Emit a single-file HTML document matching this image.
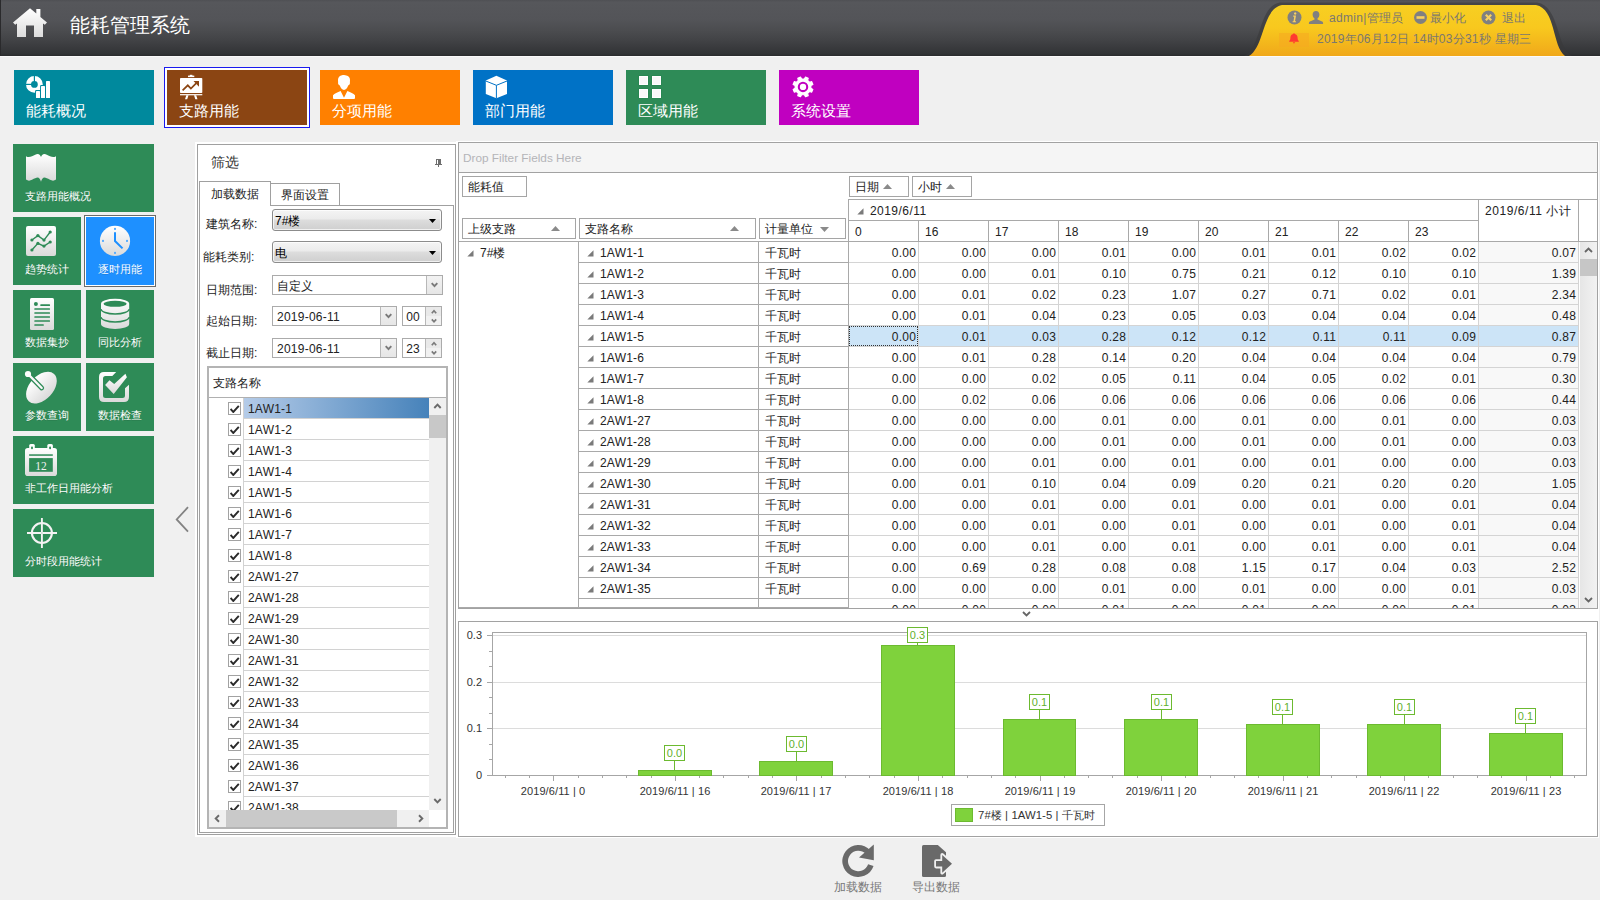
<!DOCTYPE html>
<html lang="zh"><head><meta charset="utf-8"><title>能耗管理系统</title>
<style>
*{box-sizing:border-box;margin:0;padding:0}
html,body{width:1600px;height:900px;overflow:hidden;background:#f0f0f0;font-family:"Liberation Sans",sans-serif;font-size:12px;color:#202020}
.a{position:absolute}
.t{position:absolute;white-space:nowrap;line-height:1}
#hdr{position:absolute;left:0;top:0;width:1600px;height:56px;background:linear-gradient(#4f5054 0%,#56575b 4%,#535458 35%,#4b4c4f 55%,#434447 70%,#393a3d 85%,#323436 96%,#2a2b2d 100%);border-left:1px solid #2a2a2c;box-shadow:0 1px 0 #fafafa}
.tile{position:absolute;width:140px;height:55px}
.tile .t{color:#fff;font-size:15px;left:12px;top:33px}
.lt{position:absolute;background:#2e8b57}
.lt .t{color:#fff;font-size:11px;text-shadow:0 1px 0 rgba(0,0,0,.15)}
.box{position:absolute;border:1px solid #a5a5a5;background:#fff}
.hl{position:absolute;height:1px;background:#a9a9a9}
.vl{position:absolute;width:1px;background:#a9a9a9}
.num{position:absolute;white-space:nowrap;line-height:1;text-align:right;font-size:12px;color:#222}

</style></head>
<body>
<div id="hdr"></div>
<svg class="a" style="left:0;top:0" width="60" height="45" viewBox="0 0 60 45"><defs><linearGradient id="hg" x1="0" y1="0" x2="0" y2="1"><stop offset="0" stop-color="#ffffff"/><stop offset="1" stop-color="#dcdcdc"/></linearGradient></defs><path d="M30 8.3 L13 22.4 L15.2 24.8 L17 23.4 V37 H26 V25.5 H34 V37 H43 V23.4 L44.8 24.8 L47 22.4 L40.4 16.9 V9 H36.3 V13.5 Z" fill="url(#hg)"/></svg>
<div class="t" style="left:70px;top:15px;font-size:20px;color:#fff">能耗管理系统</div>
<svg class="a" style="left:1240px;top:0" width="340" height="56" viewBox="1240 0 340 56"><defs><linearGradient id="yg" x1="0" y1="0" x2="0" y2="1"><stop offset="0" stop-color="#f7cf22"/><stop offset=".45" stop-color="#f8c81e"/><stop offset="1" stop-color="#f0a81a"/></linearGradient></defs><path d="M1244 56 C1262 48 1258 6 1280 2.5 L1537 2.5 C1560 6 1556 48 1572 56 Z" fill="#38393b" opacity=".6"/><path d="M1249 56 C1265 46 1262 9 1282 5 L1536 5 C1556 9 1552 46 1565 56 Z" fill="url(#yg)"/><circle cx="1294.5" cy="17.5" r="7" fill="#808080"/><path d="M1295.2 12.3 a1.2 1.2 0 1 1 -.01 0 Z M1293.2 15.6 H1296 L1295 21.2 H1296 V22.3 H1292.6 V21.2 H1293.5 L1294.2 16.7 H1293.2 Z" fill="#f7d060"/><path d="M1316 11 c2.2 0 3.4 1.6 3.4 3.6 c0 1.8 -.9 3.3 -1.9 4 v1 l4.6 2 c.8 .4 1 1 1 2 v.4 h-14.2 v-.4 c0 -1 .2 -1.6 1 -2 l4.6 -2 v-1 c-1 -.7 -1.9 -2.2 -1.9 -4 c0 -2 1.2 -3.6 3.4 -3.6 Z" fill="#808080"/><circle cx="1420.5" cy="17.5" r="6.5" fill="#808080"/><rect x="1416.5" y="16.2" width="8" height="2.6" fill="#f7d060"/><circle cx="1488.5" cy="17.5" r="7" fill="#808080"/><path d="M1485.8 14.8 L1491.2 20.2 M1491.2 14.8 L1485.8 20.2" stroke="#f7d060" stroke-width="2.2" fill="none"/><rect x="1279" y="33" width="30" height="14" fill="#f6a920" opacity=".55"/><g transform="translate(1294 38.5) scale(.8) translate(-1294 -38.5)"><path d="M1294 32 c.7 0 1 .4 1 1 c2.300 .5 3.500 2.300 3.500 4.600 c0 2.200 .6 3.200 1.500 4 v.9 h-12 v-.9 c.9 -.8 1.500 -1.800 1.500 -4 c0 -2.300 1.200 -4.100 3.500 -4.600 c0 -.6 .3 -1 1 -1 Z M1292.600 43.300 h2.800 a1.400 1.400 0 0 1 -2.800 0 Z" fill="#ff3a30"/></g></svg>
<div class="t" style="left:1329px;top:12px;font-size:12px;color:#7b7870;letter-spacing:0.3px">admin|管理员</div>
<div class="t" style="left:1430px;top:12px;font-size:12px;color:#7b7870">最小化</div>
<div class="t" style="left:1502px;top:12px;font-size:12px;color:#7b7870">退出</div>
<div class="t" style="left:1317px;top:33px;font-size:12px;color:#7b7870;letter-spacing:0.25px">2019年06月12日 14时03分31秒 星期三</div>
<div class="a" style="left:164px;top:67px;width:146px;height:61px;border:1px solid #1a1aee;background:#fff"></div>
<div class="tile" style="left:14px;top:70px;background:#00899d"><div class="t">能耗概况</div></div>
<div class="tile" style="left:167px;top:70px;background:#8b4513"><div class="t">支路用能</div></div>
<div class="tile" style="left:320px;top:70px;background:#ff8000"><div class="t">分项用能</div></div>
<div class="tile" style="left:473px;top:70px;background:#0072c6"><div class="t">部门用能</div></div>
<div class="tile" style="left:626px;top:70px;background:#2e8b57"><div class="t">区域用能</div></div>
<div class="tile" style="left:779px;top:70px;background:#c000c0"><div class="t">系统设置</div></div>
<svg class="a" style="left:22px;top:72px" width="34" height="30" viewBox="22 72 34 30"><circle cx="34.4" cy="84.4" r="5.9" fill="none" stroke="#fff" stroke-width="5"/><rect x="33.8" y="75" width="1.2" height="7" fill="#00899d"/><rect x="25" y="83.8" width="7" height="1.2" fill="#00899d"/><rect x="35.1" y="90.1" width="5.8" height="8.8" rx="1" fill="#00899d"/><rect x="36" y="91" width="4" height="7" rx=".6" fill="#fff"/><rect x="40.1" y="85.1" width="5.8" height="13.8" rx="1" fill="#00899d"/><rect x="41" y="86" width="4" height="12" rx=".6" fill="#fff"/><rect x="45.1" y="80.1" width="5.8" height="18.8" rx="1" fill="#00899d"/><rect x="46" y="81" width="4" height="17" rx=".6" fill="#fff"/></svg>
<svg class="a" style="left:176px;top:72px" width="30" height="30" viewBox="176 72 30 30"><rect x="180" y="78" width="22.3" height="15" rx=".8" fill="#fff"/><rect x="188" y="75.6" width="6.3" height="1.5" fill="#fff"/><rect x="189.8" y="74.8" width="2.6" height="1.5" fill="#fff"/><rect x="180" y="94.1" width="22.3" height="1.2" fill="#fff"/><path d="M186.3 95.3 L185 99.2 H187.2 L188.5 95.3 Z M194 95.3 L195.3 99.2 H197.5 L196.2 95.3 Z" fill="#fff"/><path d="M182.6 90.4 L187.8 85.3 L190.9 88.6 L196.3 83.2" fill="none" stroke="#8b4513" stroke-width="1.7"/><path d="M193.5 81 H199 V86.8 Z" fill="#8b4513"/></svg>
<svg class="a" style="left:330px;top:72px" width="30" height="30" viewBox="330 72 30 30"><path d="M344 74.9 c1 0 1.600 .3 2.300 .7 c2.300 .3 3.700 2 3.700 4.400 c0 1 -.1 1.500 -.1 2.200 c0 1 .2 1.700 -.7 2.600 c-.5 .5 -.900 .5 -1.200 1.300 c-.8 2.100 -2.100 3.800 -4 3.800 c-1.900 0 -3.200 -1.700 -4 -3.800 c-.3 -.8 -.7 -.8 -1.200 -1.300 c-.9 -.9 -.7 -1.600 -.7 -2.600 c0 -.7 -.1 -1.200 -.1 -2.200 c0 -2.600 1.700 -4.600 4 -4.800 c.7 -.2 1.300 -.3 2 -.3 Z" fill="#fff"/><path d="M340.600 90.900 L344 97.800 L347.400 90.900 C350.500 92 353.500 93.500 355 95.300 V98 Q355 99 354 99 H334 Q333 99 333 98 V95.300 C334.500 93.500 337.500 92 340.600 90.900 Z" fill="#fff"/></svg>
<svg class="a" style="left:482px;top:72px" width="30" height="30" viewBox="482 72 30 30"><path d="M496.4 75.700 L507 80.500 V93.900 L496.400 98.300 L485.800 93.900 V80.500 Z" fill="#fff"/><path d="M485.800 81 L496.400 85.300 L507 81 M496.400 85.300 V98.300" fill="none" stroke="#0072c6" stroke-width="1"/></svg>
<svg class="a" style="left:636px;top:72px" width="30" height="30" viewBox="636 72 30 30"><rect x="638.5" y="75.5" width="10" height="10" fill="#23844e"/><rect x="639" y="76" width="9" height="9" fill="#fff"/><rect x="640" y="77" width="7" height="7" fill="#f8f8f8"/><rect x="638.5" y="88.5" width="10" height="10" fill="#23844e"/><rect x="639" y="89" width="9" height="9" fill="#fff"/><rect x="640" y="90" width="7" height="7" fill="#f8f8f8"/><rect x="651.5" y="75.5" width="10" height="10" fill="#23844e"/><rect x="652" y="76" width="9" height="9" fill="#fff"/><rect x="653" y="77" width="7" height="7" fill="#f8f8f8"/><rect x="651.5" y="88.5" width="10" height="10" fill="#23844e"/><rect x="652" y="89" width="9" height="9" fill="#fff"/><rect x="653" y="90" width="7" height="7" fill="#f8f8f8"/></svg>
<svg class="a" style="left:789px;top:72px" width="30" height="30" viewBox="789 72 30 30"><path d="M810.89 88.22 L812.90 89.37 L811.74 92.15 L809.51 91.55 L807.65 93.41 L808.25 95.64 L805.47 96.80 L804.32 94.79 L801.68 94.79 L800.53 96.80 L797.75 95.64 L798.35 93.41 L796.49 91.55 L794.26 92.15 L793.10 89.37 L795.11 88.22 L795.11 85.58 L793.10 84.43 L794.26 81.65 L796.49 82.25 L798.35 80.39 L797.75 78.16 L800.53 77.00 L801.68 79.01 L804.32 79.01 L805.47 77.00 L808.25 78.16 L807.65 80.39 L809.51 82.25 L811.74 81.65 L812.90 84.43 L810.89 85.58 Z" fill="#fff" stroke="#fff" stroke-width="1.1" stroke-linejoin="round"/><circle cx="803.0" cy="86.9" r="4.2" fill="none" stroke="#c000c0" stroke-width="2.1"/></svg>
<div class="lt" style="left:13px;top:144px;width:141px;height:68px;"><div class="t" style="left:12px;top:47px">支路用能概况</div></div>
<div class="lt" style="left:13px;top:217px;width:68px;height:68px;"><div class="t" style="left:12px;top:47px">趋势统计</div></div>
<div class="a" style="left:84px;top:215px;width:72px;height:72px;border:1px solid #6a6a6a;background:#fff"></div>
<div class="lt" style="left:86px;top:217px;width:68px;height:68px;background:#1e90ff;"><div class="t" style="left:12px;top:47px">逐时用能</div></div>
<div class="lt" style="left:13px;top:290px;width:68px;height:68px;"><div class="t" style="left:12px;top:47px">数据集抄</div></div>
<div class="lt" style="left:86px;top:290px;width:68px;height:68px;"><div class="t" style="left:12px;top:47px">同比分析</div></div>
<div class="lt" style="left:13px;top:363px;width:68px;height:68px;"><div class="t" style="left:12px;top:47px">参数查询</div></div>
<div class="lt" style="left:86px;top:363px;width:68px;height:68px;"><div class="t" style="left:12px;top:47px">数据检查</div></div>
<div class="lt" style="left:13px;top:436px;width:141px;height:68px;"><div class="t" style="left:12px;top:47px">非工作日用能分析</div></div>
<div class="lt" style="left:13px;top:509px;width:141px;height:68px;"><div class="t" style="left:12px;top:47px">分时段用能统计</div></div>
<svg class="a" style="left:0;top:140px" width="160" height="440" viewBox="0 140 160 440"><defs><linearGradient id="ig" x1="0" y1="0" x2="0" y2="1"><stop offset="0" stop-color="#ffffff"/><stop offset="1" stop-color="#dadada"/></linearGradient></defs><path d="M26 156.200 C28 157.600 30 157.200 32 156.300 C34.500 155 36.200 153.900 37.500 153.900 C39.500 153.900 40.500 155.300 41 157 C41.500 155.300 42.500 153.900 44.500 153.900 C45.800 153.900 47.500 155 50 156.300 C52 157.200 54 157.600 56 156.200 V179.500 C54 181.100 52 180.800 50 179.800 C47.500 178.600 45.800 177.600 44.500 177.600 C42.800 177.600 41.700 179.300 41 181.800 C40.300 179.300 39.200 177.600 37.500 177.600 C36.200 177.600 34.500 178.600 32 179.800 C30 180.800 28 181.100 26 179.500 Z" fill="url(#ig)"/><rect x="26" y="226" width="30" height="30" rx="2" fill="url(#ig)"/><path d="M31.9 240.0 L37.9 235.6 L44.0 240.1 L50.2 232.0" fill="none" stroke="#2e8b57" stroke-width="1.4"/><circle cx="31.9" cy="240.0" r="1.6" fill="#2e8b57"/><circle cx="37.9" cy="235.6" r="1.6" fill="#2e8b57"/><circle cx="44.0" cy="240.1" r="1.6" fill="#2e8b57"/><circle cx="50.2" cy="232.0" r="1.6" fill="#2e8b57"/><path d="M31.9 250.0 L37.9 243.4 L44.0 246.1 L50.2 242.0" fill="none" stroke="#2e8b57" stroke-width="1.4"/><circle cx="31.9" cy="250.0" r="1.6" fill="#2e8b57"/><circle cx="37.9" cy="243.4" r="1.6" fill="#2e8b57"/><circle cx="44.0" cy="246.1" r="1.6" fill="#2e8b57"/><circle cx="50.2" cy="242.0" r="1.6" fill="#2e8b57"/><circle cx="115" cy="240.900" r="15.100" fill="url(#ig)"/><rect x="114.0" y="227.9" width="2" height="2" fill="#5aaeff"/><rect x="126.0" y="239.9" width="2" height="2" fill="#5aaeff"/><rect x="114.0" y="251.9" width="2" height="2" fill="#5aaeff"/><rect x="102.0" y="239.9" width="2" height="2" fill="#5aaeff"/><path d="M115 232.300 V241 L122.500 248.400" fill="none" stroke="#1e90ff" stroke-width="2"/><rect x="30" y="298" width="24" height="32" rx="1.500" fill="url(#ig)"/><circle cx="35.900" cy="303.900" r="2" fill="#2e8b57"/><rect x="40.300" y="304.300" width="9.700" height="1.600" rx=".5" fill="#2e8b57"/><rect x="34.300" y="308.2" width="15.700" height="1.600" rx=".5" fill="#2e8b57"/><rect x="34.300" y="312.2" width="15.700" height="1.600" rx=".5" fill="#2e8b57"/><rect x="34.300" y="316.2" width="15.700" height="1.600" rx=".5" fill="#2e8b57"/><rect x="34.300" y="320.2" width="15.700" height="1.600" rx=".5" fill="#2e8b57"/><rect x="34.300" y="324.200" width="9.500" height="1.600" rx=".5" fill="#2e8b57"/><path d="M101 303.700 A14.100 5 0 0 1 129.200 303.700 V324 A14.100 5 0 0 1 101 324 Z" fill="url(#ig)"/><ellipse cx="115.100" cy="303.800" rx="11.600" ry="3" fill="#2e8b57"/><path d="M101 309 A14.100 5 0 0 0 129.200 309 M101 317 A14.100 5 0 0 0 129.200 317" fill="none" stroke="#2e8b57" stroke-width="1.400"/><ellipse cx="41.400" cy="387.600" rx="18.600" ry="11.800" transform="rotate(-47 41.400 387.600)" fill="url(#ig)"/><path d="M28 374 L41.700 388" fill="none" stroke="#2e8b57" stroke-width="4.800" stroke-linecap="round"/><path d="M28 374 L41.700 388" fill="none" stroke="#f8f8f8" stroke-width="2.400" stroke-linecap="round"/><circle cx="28" cy="374" r="3.100" fill="#fcfcfc"/><path d="M116.200 372 H104 Q99 372 99 377 V397 Q99 402 104 402 H124 Q129 402 129 397 V384.800 L125 388.300 V395.500 Q125 398 122.500 398 H105.500 Q103 398 103 395.500 V378.500 Q103 376 105.500 376 H112.300 Z" fill="url(#ig)"/><path d="M105.100 385 L109.500 380.200 L114.200 383.900 L125.400 373.800 L126.900 377.200 L113.700 394.100 Z" fill="url(#ig)"/><rect x="25" y="448" width="32" height="28" rx="2.800" fill="url(#ig)"/><rect x="29.2" y="444.100" width="5.600" height="6.500" rx="1.500" fill="#fdfdfd"/><rect x="31.1" y="446.400" width="1.800" height="2.800" rx=".8" fill="#2e8b57"/><rect x="47.3" y="444.100" width="5.600" height="6.500" rx="1.500" fill="#fdfdfd"/><rect x="49.2" y="446.400" width="1.800" height="2.800" rx=".8" fill="#2e8b57"/><rect x="29.100" y="454.300" width="23.700" height="1.500" fill="#2e8b57"/><rect x="29.100" y="458.100" width="23.700" height="13.700" fill="#2e8b57"/><text x="41.100" y="470" font-family="Liberation Serif,serif" font-size="11.500" text-anchor="middle" fill="#f0f0f0">12</text><circle cx="41.900" cy="533" r="10" fill="none" stroke="#f4f2f3" stroke-width="2.100"/><path d="M27 533 H57 M41.900 518.100 V547.900" fill="none" stroke="#f4f2f3" stroke-width="1.900"/><rect x="41.400" y="532.500" width="1" height="1" fill="#7fb999"/></svg>
<svg class="a" style="left:174px;top:504px" width="16" height="30" viewBox="0 0 16 30"><path d="M14 3.2 L2.700 15.400 L14 27.700" fill="none" stroke="#838383" stroke-width="1.800"/></svg>
<div class="a" style="left:195px;top:142px;width:262px;height:695px;background:#fff"></div>
<div class="a" style="left:197px;top:144px;width:259px;height:691px;border:1px solid #a0a0a0;background:#fff"></div>
<div class="t" style="left:211px;top:155px;font-size:14px;color:#333">筛选</div>
<svg class="a" style="left:434px;top:158px" width="9" height="10" viewBox="434 158 9 10" shape-rendering="crispEdges"><g fill="#6e6e6e"><rect x="436" y="159" width="5" height="1"/><rect x="436" y="159" width="1" height="5"/><rect x="438" y="159" width="3" height="5"/><rect x="435" y="164" width="7" height="1"/><rect x="438" y="165" width="1" height="2"/></g></svg>
<div class="a" style="left:199px;top:205px;width:255px;height:628px;border:1px solid #a0a0a0;background:#fff"></div>
<div class="a" style="left:270px;top:183px;width:70px;height:23px;border:1px solid #a0a0a0;background:#fff"></div>
<div class="a" style="left:199px;top:181px;width:72px;height:25px;border:1px solid #a0a0a0;border-bottom:none;background:#fff"></div>
<div class="t" style="left:211px;top:188px;font-size:12px;color:#222">加载数据</div>
<div class="t" style="left:281px;top:189px;font-size:12px;color:#222">界面设置</div>
<div class="t" style="left:206px;top:218px;font-size:12px;color:#222">建筑名称:</div>
<div class="t" style="left:203px;top:251px;font-size:12px;color:#222">能耗类别:</div>
<div class="t" style="left:206px;top:284px;font-size:12px;color:#222">日期范围:</div>
<div class="t" style="left:206px;top:315px;font-size:12px;color:#222">起始日期:</div>
<div class="t" style="left:206px;top:347px;font-size:12px;color:#222">截止日期:</div>
<div class="a" style="left:272px;top:209px;width:170px;height:22px;border:1px solid #8c8c8c;border-radius:3px;background:linear-gradient(#f4f4f4 0%,#ebebeb 45%,#dddddd 50%,#cfcfcf 100%);box-shadow:inset 0 0 0 1px rgba(255,255,255,.7)"><div class="t" style="left:2px;top:5px;font-size:12px;color:#000">7#楼</div><svg class="a" style="left:156px;top:9px" width="7" height="4" viewBox="0 0 7 4"><path d="M0 0 H7 L3.5 4 Z" fill="#000"/></svg></div>
<div class="a" style="left:272px;top:241px;width:170px;height:22px;border:1px solid #8c8c8c;border-radius:3px;background:linear-gradient(#f4f4f4 0%,#ebebeb 45%,#dddddd 50%,#cfcfcf 100%);box-shadow:inset 0 0 0 1px rgba(255,255,255,.7)"><div class="t" style="left:2px;top:5px;font-size:12px;color:#000">电</div><svg class="a" style="left:156px;top:9px" width="7" height="4" viewBox="0 0 7 4"><path d="M0 0 H7 L3.5 4 Z" fill="#000"/></svg></div>
<div class="box" style="left:272px;top:275px;width:171px;height:20px;border-color:#ababab"><div class="t" style="left:4px;top:4px;font-size:12px;color:#222">自定义</div><div class="a" style="left:153px;top:0;width:16px;height:18px;background:linear-gradient(#f2f2f2,#e6e6e6);border-left:1px solid #b8b8b8"></div><svg class="a" style="left:157px;top:6px" width="9" height="6" viewBox="0 0 9 6"><path d="M1.7 1.1 L4.5 4.1 L7.3 1.1" fill="none" stroke="#7a7a7a" stroke-width="1.9"/></svg></div>
<div class="box" style="left:272px;top:306px;width:125px;height:20px;border-color:#ababab"><div class="t" style="left:4px;top:4px;font-size:12px;color:#222;letter-spacing:0.25px">2019-06-11</div><div class="a" style="left:107px;top:0;width:16px;height:18px;background:linear-gradient(#f2f2f2,#e6e6e6);border-left:1px solid #b8b8b8"></div><svg class="a" style="left:111px;top:6px" width="9" height="6" viewBox="0 0 9 6"><path d="M1.7 1.1 L4.5 4.1 L7.3 1.1" fill="none" stroke="#7a7a7a" stroke-width="1.9"/></svg></div>
<div class="box" style="left:402px;top:306px;width:40px;height:20px;border-color:#ababab"><div class="t" style="left:3.3px;top:4px;font-size:12px;color:#222">00</div><div class="a" style="left:22px;top:0;width:16px;height:18px;background:linear-gradient(#e9e9e9 0%,#e9e9e9 50%,#f1f1f1 50%,#f1f1f1 100%);border-left:1px solid #b8b8b8"></div><svg class="a" style="left:27px;top:1px" width="8" height="16" viewBox="0 0 8 16"><path d="M1.8 5.2 L4 2.8 L6.2 5.2 M1.8 11.4 L4 13.8 L6.2 11.4" fill="none" stroke="#7a7a7a" stroke-width="1.7"/></svg></div>
<div class="box" style="left:272px;top:338px;width:125px;height:20px;border-color:#ababab"><div class="t" style="left:4px;top:4px;font-size:12px;color:#222;letter-spacing:0.25px">2019-06-11</div><div class="a" style="left:107px;top:0;width:16px;height:18px;background:linear-gradient(#f2f2f2,#e6e6e6);border-left:1px solid #b8b8b8"></div><svg class="a" style="left:111px;top:6px" width="9" height="6" viewBox="0 0 9 6"><path d="M1.7 1.1 L4.5 4.1 L7.3 1.1" fill="none" stroke="#7a7a7a" stroke-width="1.9"/></svg></div>
<div class="box" style="left:402px;top:338px;width:40px;height:20px;border-color:#ababab"><div class="t" style="left:3.3px;top:4px;font-size:12px;color:#222">23</div><div class="a" style="left:22px;top:0;width:16px;height:18px;background:linear-gradient(#e9e9e9 0%,#e9e9e9 50%,#f1f1f1 50%,#f1f1f1 100%);border-left:1px solid #b8b8b8"></div><svg class="a" style="left:27px;top:1px" width="8" height="16" viewBox="0 0 8 16"><path d="M1.8 5.2 L4 2.8 L6.2 5.2 M1.8 11.4 L4 13.8 L6.2 11.4" fill="none" stroke="#7a7a7a" stroke-width="1.7"/></svg></div>
<div class="a" style="left:207px;top:366px;width:241px;height:463px;border:2px solid #b4b4b4;background:#fff"></div>
<div class="t" style="left:213px;top:377px;font-size:12px;color:#222">支路名称</div>
<div class="hl" style="left:209px;top:397px;width:237px;height:1px;background:#b0b0b0"></div>
<div class="a" style="left:209px;top:398px;width:220px;height:412px;overflow:hidden">
<div class="a" style="left:35px;top:0;width:185px;height:20px;background:linear-gradient(90deg,#b4cbe8,#4682ba)"></div>
<div class="hl" style="left:35px;top:20px;width:185px;background:#d2d2d2"></div>
<div class="a" style="left:19px;top:4px;width:13px;height:13px;border:1px solid #a2a2a2;background:#fff"></div><svg class="a" style="left:21px;top:6px" width="10" height="9" viewBox="0 0 10 9"><path d="M0.6 4.9 L3.3 8 L8.8 1.9" fill="none" stroke="#2a2a2a" stroke-width="1.9"/></svg>
<div class="t" style="left:39px;top:5px;font-size:12px;color:#222;letter-spacing:0.2px">1AW1-1</div>
<div class="hl" style="left:35px;top:41px;width:185px;background:#d2d2d2"></div>
<div class="a" style="left:19px;top:25px;width:13px;height:13px;border:1px solid #a2a2a2;background:#fff"></div><svg class="a" style="left:21px;top:27px" width="10" height="9" viewBox="0 0 10 9"><path d="M0.6 4.9 L3.3 8 L8.8 1.9" fill="none" stroke="#2a2a2a" stroke-width="1.9"/></svg>
<div class="t" style="left:39px;top:26px;font-size:12px;color:#222;letter-spacing:0.2px">1AW1-2</div>
<div class="hl" style="left:35px;top:62px;width:185px;background:#d2d2d2"></div>
<div class="a" style="left:19px;top:46px;width:13px;height:13px;border:1px solid #a2a2a2;background:#fff"></div><svg class="a" style="left:21px;top:48px" width="10" height="9" viewBox="0 0 10 9"><path d="M0.6 4.9 L3.3 8 L8.8 1.9" fill="none" stroke="#2a2a2a" stroke-width="1.9"/></svg>
<div class="t" style="left:39px;top:47px;font-size:12px;color:#222;letter-spacing:0.2px">1AW1-3</div>
<div class="hl" style="left:35px;top:83px;width:185px;background:#d2d2d2"></div>
<div class="a" style="left:19px;top:67px;width:13px;height:13px;border:1px solid #a2a2a2;background:#fff"></div><svg class="a" style="left:21px;top:69px" width="10" height="9" viewBox="0 0 10 9"><path d="M0.6 4.9 L3.3 8 L8.8 1.9" fill="none" stroke="#2a2a2a" stroke-width="1.9"/></svg>
<div class="t" style="left:39px;top:68px;font-size:12px;color:#222;letter-spacing:0.2px">1AW1-4</div>
<div class="hl" style="left:35px;top:104px;width:185px;background:#d2d2d2"></div>
<div class="a" style="left:19px;top:88px;width:13px;height:13px;border:1px solid #a2a2a2;background:#fff"></div><svg class="a" style="left:21px;top:90px" width="10" height="9" viewBox="0 0 10 9"><path d="M0.6 4.9 L3.3 8 L8.8 1.9" fill="none" stroke="#2a2a2a" stroke-width="1.9"/></svg>
<div class="t" style="left:39px;top:89px;font-size:12px;color:#222;letter-spacing:0.2px">1AW1-5</div>
<div class="hl" style="left:35px;top:125px;width:185px;background:#d2d2d2"></div>
<div class="a" style="left:19px;top:109px;width:13px;height:13px;border:1px solid #a2a2a2;background:#fff"></div><svg class="a" style="left:21px;top:111px" width="10" height="9" viewBox="0 0 10 9"><path d="M0.6 4.9 L3.3 8 L8.8 1.9" fill="none" stroke="#2a2a2a" stroke-width="1.9"/></svg>
<div class="t" style="left:39px;top:110px;font-size:12px;color:#222;letter-spacing:0.2px">1AW1-6</div>
<div class="hl" style="left:35px;top:146px;width:185px;background:#d2d2d2"></div>
<div class="a" style="left:19px;top:130px;width:13px;height:13px;border:1px solid #a2a2a2;background:#fff"></div><svg class="a" style="left:21px;top:132px" width="10" height="9" viewBox="0 0 10 9"><path d="M0.6 4.9 L3.3 8 L8.8 1.9" fill="none" stroke="#2a2a2a" stroke-width="1.9"/></svg>
<div class="t" style="left:39px;top:131px;font-size:12px;color:#222;letter-spacing:0.2px">1AW1-7</div>
<div class="hl" style="left:35px;top:167px;width:185px;background:#d2d2d2"></div>
<div class="a" style="left:19px;top:151px;width:13px;height:13px;border:1px solid #a2a2a2;background:#fff"></div><svg class="a" style="left:21px;top:153px" width="10" height="9" viewBox="0 0 10 9"><path d="M0.6 4.9 L3.3 8 L8.8 1.9" fill="none" stroke="#2a2a2a" stroke-width="1.9"/></svg>
<div class="t" style="left:39px;top:152px;font-size:12px;color:#222;letter-spacing:0.2px">1AW1-8</div>
<div class="hl" style="left:35px;top:188px;width:185px;background:#d2d2d2"></div>
<div class="a" style="left:19px;top:172px;width:13px;height:13px;border:1px solid #a2a2a2;background:#fff"></div><svg class="a" style="left:21px;top:174px" width="10" height="9" viewBox="0 0 10 9"><path d="M0.6 4.9 L3.3 8 L8.8 1.9" fill="none" stroke="#2a2a2a" stroke-width="1.9"/></svg>
<div class="t" style="left:39px;top:173px;font-size:12px;color:#222;letter-spacing:0.2px">2AW1-27</div>
<div class="hl" style="left:35px;top:209px;width:185px;background:#d2d2d2"></div>
<div class="a" style="left:19px;top:193px;width:13px;height:13px;border:1px solid #a2a2a2;background:#fff"></div><svg class="a" style="left:21px;top:195px" width="10" height="9" viewBox="0 0 10 9"><path d="M0.6 4.9 L3.3 8 L8.8 1.9" fill="none" stroke="#2a2a2a" stroke-width="1.9"/></svg>
<div class="t" style="left:39px;top:194px;font-size:12px;color:#222;letter-spacing:0.2px">2AW1-28</div>
<div class="hl" style="left:35px;top:230px;width:185px;background:#d2d2d2"></div>
<div class="a" style="left:19px;top:214px;width:13px;height:13px;border:1px solid #a2a2a2;background:#fff"></div><svg class="a" style="left:21px;top:216px" width="10" height="9" viewBox="0 0 10 9"><path d="M0.6 4.9 L3.3 8 L8.8 1.9" fill="none" stroke="#2a2a2a" stroke-width="1.9"/></svg>
<div class="t" style="left:39px;top:215px;font-size:12px;color:#222;letter-spacing:0.2px">2AW1-29</div>
<div class="hl" style="left:35px;top:251px;width:185px;background:#d2d2d2"></div>
<div class="a" style="left:19px;top:235px;width:13px;height:13px;border:1px solid #a2a2a2;background:#fff"></div><svg class="a" style="left:21px;top:237px" width="10" height="9" viewBox="0 0 10 9"><path d="M0.6 4.9 L3.3 8 L8.8 1.9" fill="none" stroke="#2a2a2a" stroke-width="1.9"/></svg>
<div class="t" style="left:39px;top:236px;font-size:12px;color:#222;letter-spacing:0.2px">2AW1-30</div>
<div class="hl" style="left:35px;top:272px;width:185px;background:#d2d2d2"></div>
<div class="a" style="left:19px;top:256px;width:13px;height:13px;border:1px solid #a2a2a2;background:#fff"></div><svg class="a" style="left:21px;top:258px" width="10" height="9" viewBox="0 0 10 9"><path d="M0.6 4.9 L3.3 8 L8.8 1.9" fill="none" stroke="#2a2a2a" stroke-width="1.9"/></svg>
<div class="t" style="left:39px;top:257px;font-size:12px;color:#222;letter-spacing:0.2px">2AW1-31</div>
<div class="hl" style="left:35px;top:293px;width:185px;background:#d2d2d2"></div>
<div class="a" style="left:19px;top:277px;width:13px;height:13px;border:1px solid #a2a2a2;background:#fff"></div><svg class="a" style="left:21px;top:279px" width="10" height="9" viewBox="0 0 10 9"><path d="M0.6 4.9 L3.3 8 L8.8 1.9" fill="none" stroke="#2a2a2a" stroke-width="1.9"/></svg>
<div class="t" style="left:39px;top:278px;font-size:12px;color:#222;letter-spacing:0.2px">2AW1-32</div>
<div class="hl" style="left:35px;top:314px;width:185px;background:#d2d2d2"></div>
<div class="a" style="left:19px;top:298px;width:13px;height:13px;border:1px solid #a2a2a2;background:#fff"></div><svg class="a" style="left:21px;top:300px" width="10" height="9" viewBox="0 0 10 9"><path d="M0.6 4.9 L3.3 8 L8.8 1.9" fill="none" stroke="#2a2a2a" stroke-width="1.9"/></svg>
<div class="t" style="left:39px;top:299px;font-size:12px;color:#222;letter-spacing:0.2px">2AW1-33</div>
<div class="hl" style="left:35px;top:335px;width:185px;background:#d2d2d2"></div>
<div class="a" style="left:19px;top:319px;width:13px;height:13px;border:1px solid #a2a2a2;background:#fff"></div><svg class="a" style="left:21px;top:321px" width="10" height="9" viewBox="0 0 10 9"><path d="M0.6 4.9 L3.3 8 L8.8 1.9" fill="none" stroke="#2a2a2a" stroke-width="1.9"/></svg>
<div class="t" style="left:39px;top:320px;font-size:12px;color:#222;letter-spacing:0.2px">2AW1-34</div>
<div class="hl" style="left:35px;top:356px;width:185px;background:#d2d2d2"></div>
<div class="a" style="left:19px;top:340px;width:13px;height:13px;border:1px solid #a2a2a2;background:#fff"></div><svg class="a" style="left:21px;top:342px" width="10" height="9" viewBox="0 0 10 9"><path d="M0.6 4.9 L3.3 8 L8.8 1.9" fill="none" stroke="#2a2a2a" stroke-width="1.9"/></svg>
<div class="t" style="left:39px;top:341px;font-size:12px;color:#222;letter-spacing:0.2px">2AW1-35</div>
<div class="hl" style="left:35px;top:377px;width:185px;background:#d2d2d2"></div>
<div class="a" style="left:19px;top:361px;width:13px;height:13px;border:1px solid #a2a2a2;background:#fff"></div><svg class="a" style="left:21px;top:363px" width="10" height="9" viewBox="0 0 10 9"><path d="M0.6 4.9 L3.3 8 L8.8 1.9" fill="none" stroke="#2a2a2a" stroke-width="1.9"/></svg>
<div class="t" style="left:39px;top:362px;font-size:12px;color:#222;letter-spacing:0.2px">2AW1-36</div>
<div class="hl" style="left:35px;top:398px;width:185px;background:#d2d2d2"></div>
<div class="a" style="left:19px;top:382px;width:13px;height:13px;border:1px solid #a2a2a2;background:#fff"></div><svg class="a" style="left:21px;top:384px" width="10" height="9" viewBox="0 0 10 9"><path d="M0.6 4.9 L3.3 8 L8.8 1.9" fill="none" stroke="#2a2a2a" stroke-width="1.9"/></svg>
<div class="t" style="left:39px;top:383px;font-size:12px;color:#222;letter-spacing:0.2px">2AW1-37</div>
<div class="hl" style="left:35px;top:419px;width:185px;background:#d2d2d2"></div>
<div class="a" style="left:19px;top:403px;width:13px;height:13px;border:1px solid #a2a2a2;background:#fff"></div><svg class="a" style="left:21px;top:405px" width="10" height="9" viewBox="0 0 10 9"><path d="M0.6 4.9 L3.3 8 L8.8 1.9" fill="none" stroke="#2a2a2a" stroke-width="1.9"/></svg>
<div class="t" style="left:39px;top:404px;font-size:12px;color:#222;letter-spacing:0.2px">2AW1-38</div>
<div class="vl" style="left:34px;top:0;height:412px;background:#d2d2d2"></div>
</div>
<div class="a" style="left:429px;top:398px;width:17px;height:412px;background:#f0f0f0"></div>
<div class="a" style="left:429px;top:415px;width:17px;height:23px;background:#c8c8c8"></div>
<svg class="a" style="left:433px;top:403px" width="9" height="6" viewBox="0 0 9 6"><path d="M1.3 5 L4.5 1.7 L7.7 5" fill="none" stroke="#6a6a6a" stroke-width="1.9"/></svg>
<svg class="a" style="left:433px;top:798px" width="9" height="6" viewBox="0 0 9 6"><path d="M1.3 1 L4.5 4.3 L7.7 1" fill="none" stroke="#6a6a6a" stroke-width="1.9"/></svg>
<div class="a" style="left:209px;top:810px;width:220px;height:17px;background:#f0f0f0"></div>
<div class="a" style="left:226px;top:810px;width:171px;height:17px;background:#c9c9c9"></div>
<svg class="a" style="left:214px;top:814px" width="6" height="9" viewBox="0 0 6 9"><path d="M5 1.3 L1.7 4.5 L5 7.7" fill="none" stroke="#6a6a6a" stroke-width="1.9"/></svg>
<svg class="a" style="left:418px;top:814px" width="6" height="9" viewBox="0 0 6 9"><path d="M1 1.3 L4.3 4.5 L1 7.7" fill="none" stroke="#6a6a6a" stroke-width="1.9"/></svg>
<div class="a" style="left:456px;top:141px;width:1143px;height:697px;background:#fff"></div>
<div class="a" id="grid" style="left:458px;top:142px;width:1140px;height:467px;border:1px solid #a2a2a2;background:#fff;overflow:hidden"></div>
<div class="a" style="left:459px;top:143px;width:1138px;height:29px;background:#f5f5f5"></div>
<div class="hl" style="left:459px;top:172px;width:1138px;background:#a2a2a2"></div>
<div class="t" style="left:463px;top:153px;font-size:11.8px;color:#b4b4b8">Drop Filter Fields Here</div>
<div class="box" style="left:462px;top:176px;width:65px;height:21px"><div class="t" style="left:5px;top:4px;font-size:12px;color:#222">能耗值</div></div>
<div class="box" style="left:849px;top:176px;width:60px;height:21px"><div class="t" style="left:5px;top:4px;font-size:12px;color:#222">日期</div><svg class="a" style="left:33px;top:7px" width="9" height="5" viewBox="0 0 9 5"><path d="M0 5 L4.5 0 L9 5 Z" fill="#8a8a8a"/></svg></div>
<div class="box" style="left:912px;top:176px;width:60px;height:21px"><div class="t" style="left:5px;top:4px;font-size:12px;color:#222">小时</div><svg class="a" style="left:33px;top:7px" width="9" height="5" viewBox="0 0 9 5"><path d="M0 5 L4.5 0 L9 5 Z" fill="#8a8a8a"/></svg></div>
<div class="box" style="left:462px;top:218px;width:114px;height:21px"><div class="t" style="left:5px;top:4px;font-size:12px;color:#222">上级支路</div><svg class="a" style="left:88px;top:7px" width="9" height="5" viewBox="0 0 9 5"><path d="M0 5 L4.5 0 L9 5 Z" fill="#8a8a8a"/></svg></div>
<div class="box" style="left:579px;top:218px;width:177px;height:21px"><div class="t" style="left:5px;top:4px;font-size:12px;color:#222">支路名称</div><svg class="a" style="left:150px;top:7px" width="9" height="5" viewBox="0 0 9 5"><path d="M0 5 L4.5 0 L9 5 Z" fill="#8a8a8a"/></svg></div>
<div class="box" style="left:759px;top:218px;width:87px;height:21px"><div class="t" style="left:5px;top:4px;font-size:12px;color:#222">计量单位</div><svg class="a" style="left:60px;top:8px" width="9" height="5" viewBox="0 0 9 5"><path d="M0 0 L9 0 L4.5 5 Z" fill="#8a8a8a"/></svg></div>
<div class="hl" style="left:848px;top:199px;width:749px"></div>
<div class="vl" style="left:848px;top:199px;height:409px"></div>
<div class="hl" style="left:848px;top:220px;width:631px"></div>
<div class="hl" style="left:459px;top:241px;width:1138px"></div>
<div class="vl" style="left:1478px;top:199px;height:43px"></div>
<div class="vl" style="left:1578px;top:199px;height:43px"></div>
<div class="vl" style="left:918px;top:221px;height:21px"></div>
<div class="vl" style="left:988px;top:221px;height:21px"></div>
<div class="vl" style="left:1058px;top:221px;height:21px"></div>
<div class="vl" style="left:1128px;top:221px;height:21px"></div>
<div class="vl" style="left:1198px;top:221px;height:21px"></div>
<div class="vl" style="left:1268px;top:221px;height:21px"></div>
<div class="vl" style="left:1338px;top:221px;height:21px"></div>
<div class="vl" style="left:1408px;top:221px;height:21px"></div>
<svg class="a" style="left:857px;top:208px" width="7" height="7" viewBox="0 0 7 7"><path d="M6.5 .3 V6.5 H.3 Z" fill="#7a7a7a"/></svg>
<div class="t" style="left:870px;top:205px;font-size:12px;color:#222;letter-spacing:0.45px">2019/6/11</div>
<div class="t" style="left:1485px;top:205px;font-size:12px;color:#222;letter-spacing:0.55px">2019/6/11 小计</div>
<div class="t" style="left:855px;top:226px;font-size:12px;color:#222">0</div>
<div class="t" style="left:925px;top:226px;font-size:12px;color:#222">16</div>
<div class="t" style="left:995px;top:226px;font-size:12px;color:#222">17</div>
<div class="t" style="left:1065px;top:226px;font-size:12px;color:#222">18</div>
<div class="t" style="left:1135px;top:226px;font-size:12px;color:#222">19</div>
<div class="t" style="left:1205px;top:226px;font-size:12px;color:#222">20</div>
<div class="t" style="left:1275px;top:226px;font-size:12px;color:#222">21</div>
<div class="t" style="left:1345px;top:226px;font-size:12px;color:#222">22</div>
<div class="t" style="left:1415px;top:226px;font-size:12px;color:#222">23</div>
<div class="a" style="left:459px;top:242px;width:1138px;height:366px;overflow:hidden">
<div class="a" style="left:1020px;top:0;width:99px;height:366px;background:#f8f8f8"></div>
<div class="a" style="left:390px;top:84px;width:729px;height:20px;background:#cce4f7"></div>
<div class="vl" style="left:119px;top:0;height:366px"></div>
<div class="vl" style="left:299px;top:0;height:366px"></div>
<div class="vl" style="left:459px;top:0;height:366px;background:#d4d4d4"></div>
<div class="vl" style="left:529px;top:0;height:366px;background:#d4d4d4"></div>
<div class="vl" style="left:599px;top:0;height:366px;background:#d4d4d4"></div>
<div class="vl" style="left:669px;top:0;height:366px;background:#d4d4d4"></div>
<div class="vl" style="left:739px;top:0;height:366px;background:#d4d4d4"></div>
<div class="vl" style="left:809px;top:0;height:366px;background:#d4d4d4"></div>
<div class="vl" style="left:879px;top:0;height:366px;background:#d4d4d4"></div>
<div class="vl" style="left:949px;top:0;height:366px;background:#d4d4d4"></div>
<div class="vl" style="left:1019px;top:0;height:366px;background:#d4d4d4"></div>
<div class="vl" style="left:1119px;top:0;height:366px;background:#d4d4d4"></div>
<svg class="a" style="left:8px;top:8px" width="7" height="7" viewBox="0 0 7 7"><path d="M6.5 .3 V6.5 H.3 Z" fill="#7a7a7a"/></svg>
<div class="t" style="left:21px;top:5px;font-size:12px;color:#222">7#楼</div>
<div class="hl" style="left:119px;top:20px;width:270px"></div>
<div class="hl" style="left:390px;top:20px;width:729px;background:#d4d4d4"></div>
<svg class="a" style="left:128px;top:8px" width="7" height="7" viewBox="0 0 7 7"><path d="M6.5 .3 V6.5 H.3 Z" fill="#7a7a7a"/></svg>
<div class="t" style="left:141px;top:5px;font-size:12px;color:#222;letter-spacing:0.2px">1AW1-1</div>
<div class="t" style="left:306px;top:5px;font-size:12px;color:#222">千瓦时</div>
<div class="num" style="left:397.3px;top:5px;width:60px;letter-spacing:0.3px">0.00</div>
<div class="num" style="left:467.3px;top:5px;width:60px;letter-spacing:0.3px">0.00</div>
<div class="num" style="left:537.3px;top:5px;width:60px;letter-spacing:0.3px">0.00</div>
<div class="num" style="left:607.3px;top:5px;width:60px;letter-spacing:0.3px">0.01</div>
<div class="num" style="left:677.3px;top:5px;width:60px;letter-spacing:0.3px">0.00</div>
<div class="num" style="left:747.3px;top:5px;width:60px;letter-spacing:0.3px">0.01</div>
<div class="num" style="left:817.3px;top:5px;width:60px;letter-spacing:0.3px">0.01</div>
<div class="num" style="left:887.3px;top:5px;width:60px;letter-spacing:0.3px">0.02</div>
<div class="num" style="left:957.3px;top:5px;width:60px;letter-spacing:0.3px">0.02</div>
<div class="num" style="left:1057.3px;top:5px;width:60px;letter-spacing:0.3px">0.07</div>
<div class="hl" style="left:119px;top:41px;width:270px"></div>
<div class="hl" style="left:390px;top:41px;width:729px;background:#d4d4d4"></div>
<svg class="a" style="left:128px;top:29px" width="7" height="7" viewBox="0 0 7 7"><path d="M6.5 .3 V6.5 H.3 Z" fill="#7a7a7a"/></svg>
<div class="t" style="left:141px;top:26px;font-size:12px;color:#222;letter-spacing:0.2px">1AW1-2</div>
<div class="t" style="left:306px;top:26px;font-size:12px;color:#222">千瓦时</div>
<div class="num" style="left:397.3px;top:26px;width:60px;letter-spacing:0.3px">0.00</div>
<div class="num" style="left:467.3px;top:26px;width:60px;letter-spacing:0.3px">0.00</div>
<div class="num" style="left:537.3px;top:26px;width:60px;letter-spacing:0.3px">0.01</div>
<div class="num" style="left:607.3px;top:26px;width:60px;letter-spacing:0.3px">0.10</div>
<div class="num" style="left:677.3px;top:26px;width:60px;letter-spacing:0.3px">0.75</div>
<div class="num" style="left:747.3px;top:26px;width:60px;letter-spacing:0.3px">0.21</div>
<div class="num" style="left:817.3px;top:26px;width:60px;letter-spacing:0.3px">0.12</div>
<div class="num" style="left:887.3px;top:26px;width:60px;letter-spacing:0.3px">0.10</div>
<div class="num" style="left:957.3px;top:26px;width:60px;letter-spacing:0.3px">0.10</div>
<div class="num" style="left:1057.3px;top:26px;width:60px;letter-spacing:0.3px">1.39</div>
<div class="hl" style="left:119px;top:62px;width:270px"></div>
<div class="hl" style="left:390px;top:62px;width:729px;background:#d4d4d4"></div>
<svg class="a" style="left:128px;top:50px" width="7" height="7" viewBox="0 0 7 7"><path d="M6.5 .3 V6.5 H.3 Z" fill="#7a7a7a"/></svg>
<div class="t" style="left:141px;top:47px;font-size:12px;color:#222;letter-spacing:0.2px">1AW1-3</div>
<div class="t" style="left:306px;top:47px;font-size:12px;color:#222">千瓦时</div>
<div class="num" style="left:397.3px;top:47px;width:60px;letter-spacing:0.3px">0.00</div>
<div class="num" style="left:467.3px;top:47px;width:60px;letter-spacing:0.3px">0.01</div>
<div class="num" style="left:537.3px;top:47px;width:60px;letter-spacing:0.3px">0.02</div>
<div class="num" style="left:607.3px;top:47px;width:60px;letter-spacing:0.3px">0.23</div>
<div class="num" style="left:677.3px;top:47px;width:60px;letter-spacing:0.3px">1.07</div>
<div class="num" style="left:747.3px;top:47px;width:60px;letter-spacing:0.3px">0.27</div>
<div class="num" style="left:817.3px;top:47px;width:60px;letter-spacing:0.3px">0.71</div>
<div class="num" style="left:887.3px;top:47px;width:60px;letter-spacing:0.3px">0.02</div>
<div class="num" style="left:957.3px;top:47px;width:60px;letter-spacing:0.3px">0.01</div>
<div class="num" style="left:1057.3px;top:47px;width:60px;letter-spacing:0.3px">2.34</div>
<div class="hl" style="left:119px;top:83px;width:270px"></div>
<div class="hl" style="left:390px;top:83px;width:729px;background:#d4d4d4"></div>
<svg class="a" style="left:128px;top:71px" width="7" height="7" viewBox="0 0 7 7"><path d="M6.5 .3 V6.5 H.3 Z" fill="#7a7a7a"/></svg>
<div class="t" style="left:141px;top:68px;font-size:12px;color:#222;letter-spacing:0.2px">1AW1-4</div>
<div class="t" style="left:306px;top:68px;font-size:12px;color:#222">千瓦时</div>
<div class="num" style="left:397.3px;top:68px;width:60px;letter-spacing:0.3px">0.00</div>
<div class="num" style="left:467.3px;top:68px;width:60px;letter-spacing:0.3px">0.01</div>
<div class="num" style="left:537.3px;top:68px;width:60px;letter-spacing:0.3px">0.04</div>
<div class="num" style="left:607.3px;top:68px;width:60px;letter-spacing:0.3px">0.23</div>
<div class="num" style="left:677.3px;top:68px;width:60px;letter-spacing:0.3px">0.05</div>
<div class="num" style="left:747.3px;top:68px;width:60px;letter-spacing:0.3px">0.03</div>
<div class="num" style="left:817.3px;top:68px;width:60px;letter-spacing:0.3px">0.04</div>
<div class="num" style="left:887.3px;top:68px;width:60px;letter-spacing:0.3px">0.04</div>
<div class="num" style="left:957.3px;top:68px;width:60px;letter-spacing:0.3px">0.04</div>
<div class="num" style="left:1057.3px;top:68px;width:60px;letter-spacing:0.3px">0.48</div>
<div class="hl" style="left:119px;top:104px;width:270px"></div>
<div class="hl" style="left:390px;top:104px;width:729px;background:#d4d4d4"></div>
<svg class="a" style="left:128px;top:92px" width="7" height="7" viewBox="0 0 7 7"><path d="M6.5 .3 V6.5 H.3 Z" fill="#7a7a7a"/></svg>
<div class="t" style="left:141px;top:89px;font-size:12px;color:#222;letter-spacing:0.2px">1AW1-5</div>
<div class="t" style="left:306px;top:89px;font-size:12px;color:#222">千瓦时</div>
<div class="num" style="left:397.3px;top:89px;width:60px;letter-spacing:0.3px">0.00</div>
<div class="num" style="left:467.3px;top:89px;width:60px;letter-spacing:0.3px">0.01</div>
<div class="num" style="left:537.3px;top:89px;width:60px;letter-spacing:0.3px">0.03</div>
<div class="num" style="left:607.3px;top:89px;width:60px;letter-spacing:0.3px">0.28</div>
<div class="num" style="left:677.3px;top:89px;width:60px;letter-spacing:0.3px">0.12</div>
<div class="num" style="left:747.3px;top:89px;width:60px;letter-spacing:0.3px">0.12</div>
<div class="num" style="left:817.3px;top:89px;width:60px;letter-spacing:0.3px">0.11</div>
<div class="num" style="left:887.3px;top:89px;width:60px;letter-spacing:0.3px">0.11</div>
<div class="num" style="left:957.3px;top:89px;width:60px;letter-spacing:0.3px">0.09</div>
<div class="num" style="left:1057.3px;top:89px;width:60px;letter-spacing:0.3px">0.87</div>
<div class="hl" style="left:119px;top:125px;width:270px"></div>
<div class="hl" style="left:390px;top:125px;width:729px;background:#d4d4d4"></div>
<svg class="a" style="left:128px;top:113px" width="7" height="7" viewBox="0 0 7 7"><path d="M6.5 .3 V6.5 H.3 Z" fill="#7a7a7a"/></svg>
<div class="t" style="left:141px;top:110px;font-size:12px;color:#222;letter-spacing:0.2px">1AW1-6</div>
<div class="t" style="left:306px;top:110px;font-size:12px;color:#222">千瓦时</div>
<div class="num" style="left:397.3px;top:110px;width:60px;letter-spacing:0.3px">0.00</div>
<div class="num" style="left:467.3px;top:110px;width:60px;letter-spacing:0.3px">0.01</div>
<div class="num" style="left:537.3px;top:110px;width:60px;letter-spacing:0.3px">0.28</div>
<div class="num" style="left:607.3px;top:110px;width:60px;letter-spacing:0.3px">0.14</div>
<div class="num" style="left:677.3px;top:110px;width:60px;letter-spacing:0.3px">0.20</div>
<div class="num" style="left:747.3px;top:110px;width:60px;letter-spacing:0.3px">0.04</div>
<div class="num" style="left:817.3px;top:110px;width:60px;letter-spacing:0.3px">0.04</div>
<div class="num" style="left:887.3px;top:110px;width:60px;letter-spacing:0.3px">0.04</div>
<div class="num" style="left:957.3px;top:110px;width:60px;letter-spacing:0.3px">0.04</div>
<div class="num" style="left:1057.3px;top:110px;width:60px;letter-spacing:0.3px">0.79</div>
<div class="hl" style="left:119px;top:146px;width:270px"></div>
<div class="hl" style="left:390px;top:146px;width:729px;background:#d4d4d4"></div>
<svg class="a" style="left:128px;top:134px" width="7" height="7" viewBox="0 0 7 7"><path d="M6.5 .3 V6.5 H.3 Z" fill="#7a7a7a"/></svg>
<div class="t" style="left:141px;top:131px;font-size:12px;color:#222;letter-spacing:0.2px">1AW1-7</div>
<div class="t" style="left:306px;top:131px;font-size:12px;color:#222">千瓦时</div>
<div class="num" style="left:397.3px;top:131px;width:60px;letter-spacing:0.3px">0.00</div>
<div class="num" style="left:467.3px;top:131px;width:60px;letter-spacing:0.3px">0.00</div>
<div class="num" style="left:537.3px;top:131px;width:60px;letter-spacing:0.3px">0.02</div>
<div class="num" style="left:607.3px;top:131px;width:60px;letter-spacing:0.3px">0.05</div>
<div class="num" style="left:677.3px;top:131px;width:60px;letter-spacing:0.3px">0.11</div>
<div class="num" style="left:747.3px;top:131px;width:60px;letter-spacing:0.3px">0.04</div>
<div class="num" style="left:817.3px;top:131px;width:60px;letter-spacing:0.3px">0.05</div>
<div class="num" style="left:887.3px;top:131px;width:60px;letter-spacing:0.3px">0.02</div>
<div class="num" style="left:957.3px;top:131px;width:60px;letter-spacing:0.3px">0.01</div>
<div class="num" style="left:1057.3px;top:131px;width:60px;letter-spacing:0.3px">0.30</div>
<div class="hl" style="left:119px;top:167px;width:270px"></div>
<div class="hl" style="left:390px;top:167px;width:729px;background:#d4d4d4"></div>
<svg class="a" style="left:128px;top:155px" width="7" height="7" viewBox="0 0 7 7"><path d="M6.5 .3 V6.5 H.3 Z" fill="#7a7a7a"/></svg>
<div class="t" style="left:141px;top:152px;font-size:12px;color:#222;letter-spacing:0.2px">1AW1-8</div>
<div class="t" style="left:306px;top:152px;font-size:12px;color:#222">千瓦时</div>
<div class="num" style="left:397.3px;top:152px;width:60px;letter-spacing:0.3px">0.00</div>
<div class="num" style="left:467.3px;top:152px;width:60px;letter-spacing:0.3px">0.02</div>
<div class="num" style="left:537.3px;top:152px;width:60px;letter-spacing:0.3px">0.06</div>
<div class="num" style="left:607.3px;top:152px;width:60px;letter-spacing:0.3px">0.06</div>
<div class="num" style="left:677.3px;top:152px;width:60px;letter-spacing:0.3px">0.06</div>
<div class="num" style="left:747.3px;top:152px;width:60px;letter-spacing:0.3px">0.06</div>
<div class="num" style="left:817.3px;top:152px;width:60px;letter-spacing:0.3px">0.06</div>
<div class="num" style="left:887.3px;top:152px;width:60px;letter-spacing:0.3px">0.06</div>
<div class="num" style="left:957.3px;top:152px;width:60px;letter-spacing:0.3px">0.06</div>
<div class="num" style="left:1057.3px;top:152px;width:60px;letter-spacing:0.3px">0.44</div>
<div class="hl" style="left:119px;top:188px;width:270px"></div>
<div class="hl" style="left:390px;top:188px;width:729px;background:#d4d4d4"></div>
<svg class="a" style="left:128px;top:176px" width="7" height="7" viewBox="0 0 7 7"><path d="M6.5 .3 V6.5 H.3 Z" fill="#7a7a7a"/></svg>
<div class="t" style="left:141px;top:173px;font-size:12px;color:#222;letter-spacing:0.2px">2AW1-27</div>
<div class="t" style="left:306px;top:173px;font-size:12px;color:#222">千瓦时</div>
<div class="num" style="left:397.3px;top:173px;width:60px;letter-spacing:0.3px">0.00</div>
<div class="num" style="left:467.3px;top:173px;width:60px;letter-spacing:0.3px">0.00</div>
<div class="num" style="left:537.3px;top:173px;width:60px;letter-spacing:0.3px">0.00</div>
<div class="num" style="left:607.3px;top:173px;width:60px;letter-spacing:0.3px">0.01</div>
<div class="num" style="left:677.3px;top:173px;width:60px;letter-spacing:0.3px">0.00</div>
<div class="num" style="left:747.3px;top:173px;width:60px;letter-spacing:0.3px">0.01</div>
<div class="num" style="left:817.3px;top:173px;width:60px;letter-spacing:0.3px">0.00</div>
<div class="num" style="left:887.3px;top:173px;width:60px;letter-spacing:0.3px">0.01</div>
<div class="num" style="left:957.3px;top:173px;width:60px;letter-spacing:0.3px">0.00</div>
<div class="num" style="left:1057.3px;top:173px;width:60px;letter-spacing:0.3px">0.03</div>
<div class="hl" style="left:119px;top:209px;width:270px"></div>
<div class="hl" style="left:390px;top:209px;width:729px;background:#d4d4d4"></div>
<svg class="a" style="left:128px;top:197px" width="7" height="7" viewBox="0 0 7 7"><path d="M6.5 .3 V6.5 H.3 Z" fill="#7a7a7a"/></svg>
<div class="t" style="left:141px;top:194px;font-size:12px;color:#222;letter-spacing:0.2px">2AW1-28</div>
<div class="t" style="left:306px;top:194px;font-size:12px;color:#222">千瓦时</div>
<div class="num" style="left:397.3px;top:194px;width:60px;letter-spacing:0.3px">0.00</div>
<div class="num" style="left:467.3px;top:194px;width:60px;letter-spacing:0.3px">0.00</div>
<div class="num" style="left:537.3px;top:194px;width:60px;letter-spacing:0.3px">0.00</div>
<div class="num" style="left:607.3px;top:194px;width:60px;letter-spacing:0.3px">0.01</div>
<div class="num" style="left:677.3px;top:194px;width:60px;letter-spacing:0.3px">0.00</div>
<div class="num" style="left:747.3px;top:194px;width:60px;letter-spacing:0.3px">0.01</div>
<div class="num" style="left:817.3px;top:194px;width:60px;letter-spacing:0.3px">0.00</div>
<div class="num" style="left:887.3px;top:194px;width:60px;letter-spacing:0.3px">0.01</div>
<div class="num" style="left:957.3px;top:194px;width:60px;letter-spacing:0.3px">0.00</div>
<div class="num" style="left:1057.3px;top:194px;width:60px;letter-spacing:0.3px">0.03</div>
<div class="hl" style="left:119px;top:230px;width:270px"></div>
<div class="hl" style="left:390px;top:230px;width:729px;background:#d4d4d4"></div>
<svg class="a" style="left:128px;top:218px" width="7" height="7" viewBox="0 0 7 7"><path d="M6.5 .3 V6.5 H.3 Z" fill="#7a7a7a"/></svg>
<div class="t" style="left:141px;top:215px;font-size:12px;color:#222;letter-spacing:0.2px">2AW1-29</div>
<div class="t" style="left:306px;top:215px;font-size:12px;color:#222">千瓦时</div>
<div class="num" style="left:397.3px;top:215px;width:60px;letter-spacing:0.3px">0.00</div>
<div class="num" style="left:467.3px;top:215px;width:60px;letter-spacing:0.3px">0.00</div>
<div class="num" style="left:537.3px;top:215px;width:60px;letter-spacing:0.3px">0.01</div>
<div class="num" style="left:607.3px;top:215px;width:60px;letter-spacing:0.3px">0.00</div>
<div class="num" style="left:677.3px;top:215px;width:60px;letter-spacing:0.3px">0.01</div>
<div class="num" style="left:747.3px;top:215px;width:60px;letter-spacing:0.3px">0.00</div>
<div class="num" style="left:817.3px;top:215px;width:60px;letter-spacing:0.3px">0.01</div>
<div class="num" style="left:887.3px;top:215px;width:60px;letter-spacing:0.3px">0.00</div>
<div class="num" style="left:957.3px;top:215px;width:60px;letter-spacing:0.3px">0.00</div>
<div class="num" style="left:1057.3px;top:215px;width:60px;letter-spacing:0.3px">0.03</div>
<div class="hl" style="left:119px;top:251px;width:270px"></div>
<div class="hl" style="left:390px;top:251px;width:729px;background:#d4d4d4"></div>
<svg class="a" style="left:128px;top:239px" width="7" height="7" viewBox="0 0 7 7"><path d="M6.5 .3 V6.5 H.3 Z" fill="#7a7a7a"/></svg>
<div class="t" style="left:141px;top:236px;font-size:12px;color:#222;letter-spacing:0.2px">2AW1-30</div>
<div class="t" style="left:306px;top:236px;font-size:12px;color:#222">千瓦时</div>
<div class="num" style="left:397.3px;top:236px;width:60px;letter-spacing:0.3px">0.00</div>
<div class="num" style="left:467.3px;top:236px;width:60px;letter-spacing:0.3px">0.01</div>
<div class="num" style="left:537.3px;top:236px;width:60px;letter-spacing:0.3px">0.10</div>
<div class="num" style="left:607.3px;top:236px;width:60px;letter-spacing:0.3px">0.04</div>
<div class="num" style="left:677.3px;top:236px;width:60px;letter-spacing:0.3px">0.09</div>
<div class="num" style="left:747.3px;top:236px;width:60px;letter-spacing:0.3px">0.20</div>
<div class="num" style="left:817.3px;top:236px;width:60px;letter-spacing:0.3px">0.21</div>
<div class="num" style="left:887.3px;top:236px;width:60px;letter-spacing:0.3px">0.20</div>
<div class="num" style="left:957.3px;top:236px;width:60px;letter-spacing:0.3px">0.20</div>
<div class="num" style="left:1057.3px;top:236px;width:60px;letter-spacing:0.3px">1.05</div>
<div class="hl" style="left:119px;top:272px;width:270px"></div>
<div class="hl" style="left:390px;top:272px;width:729px;background:#d4d4d4"></div>
<svg class="a" style="left:128px;top:260px" width="7" height="7" viewBox="0 0 7 7"><path d="M6.5 .3 V6.5 H.3 Z" fill="#7a7a7a"/></svg>
<div class="t" style="left:141px;top:257px;font-size:12px;color:#222;letter-spacing:0.2px">2AW1-31</div>
<div class="t" style="left:306px;top:257px;font-size:12px;color:#222">千瓦时</div>
<div class="num" style="left:397.3px;top:257px;width:60px;letter-spacing:0.3px">0.00</div>
<div class="num" style="left:467.3px;top:257px;width:60px;letter-spacing:0.3px">0.00</div>
<div class="num" style="left:537.3px;top:257px;width:60px;letter-spacing:0.3px">0.01</div>
<div class="num" style="left:607.3px;top:257px;width:60px;letter-spacing:0.3px">0.00</div>
<div class="num" style="left:677.3px;top:257px;width:60px;letter-spacing:0.3px">0.01</div>
<div class="num" style="left:747.3px;top:257px;width:60px;letter-spacing:0.3px">0.00</div>
<div class="num" style="left:817.3px;top:257px;width:60px;letter-spacing:0.3px">0.01</div>
<div class="num" style="left:887.3px;top:257px;width:60px;letter-spacing:0.3px">0.00</div>
<div class="num" style="left:957.3px;top:257px;width:60px;letter-spacing:0.3px">0.01</div>
<div class="num" style="left:1057.3px;top:257px;width:60px;letter-spacing:0.3px">0.04</div>
<div class="hl" style="left:119px;top:293px;width:270px"></div>
<div class="hl" style="left:390px;top:293px;width:729px;background:#d4d4d4"></div>
<svg class="a" style="left:128px;top:281px" width="7" height="7" viewBox="0 0 7 7"><path d="M6.5 .3 V6.5 H.3 Z" fill="#7a7a7a"/></svg>
<div class="t" style="left:141px;top:278px;font-size:12px;color:#222;letter-spacing:0.2px">2AW1-32</div>
<div class="t" style="left:306px;top:278px;font-size:12px;color:#222">千瓦时</div>
<div class="num" style="left:397.3px;top:278px;width:60px;letter-spacing:0.3px">0.00</div>
<div class="num" style="left:467.3px;top:278px;width:60px;letter-spacing:0.3px">0.00</div>
<div class="num" style="left:537.3px;top:278px;width:60px;letter-spacing:0.3px">0.01</div>
<div class="num" style="left:607.3px;top:278px;width:60px;letter-spacing:0.3px">0.00</div>
<div class="num" style="left:677.3px;top:278px;width:60px;letter-spacing:0.3px">0.01</div>
<div class="num" style="left:747.3px;top:278px;width:60px;letter-spacing:0.3px">0.00</div>
<div class="num" style="left:817.3px;top:278px;width:60px;letter-spacing:0.3px">0.01</div>
<div class="num" style="left:887.3px;top:278px;width:60px;letter-spacing:0.3px">0.00</div>
<div class="num" style="left:957.3px;top:278px;width:60px;letter-spacing:0.3px">0.01</div>
<div class="num" style="left:1057.3px;top:278px;width:60px;letter-spacing:0.3px">0.04</div>
<div class="hl" style="left:119px;top:314px;width:270px"></div>
<div class="hl" style="left:390px;top:314px;width:729px;background:#d4d4d4"></div>
<svg class="a" style="left:128px;top:302px" width="7" height="7" viewBox="0 0 7 7"><path d="M6.5 .3 V6.5 H.3 Z" fill="#7a7a7a"/></svg>
<div class="t" style="left:141px;top:299px;font-size:12px;color:#222;letter-spacing:0.2px">2AW1-33</div>
<div class="t" style="left:306px;top:299px;font-size:12px;color:#222">千瓦时</div>
<div class="num" style="left:397.3px;top:299px;width:60px;letter-spacing:0.3px">0.00</div>
<div class="num" style="left:467.3px;top:299px;width:60px;letter-spacing:0.3px">0.00</div>
<div class="num" style="left:537.3px;top:299px;width:60px;letter-spacing:0.3px">0.01</div>
<div class="num" style="left:607.3px;top:299px;width:60px;letter-spacing:0.3px">0.00</div>
<div class="num" style="left:677.3px;top:299px;width:60px;letter-spacing:0.3px">0.01</div>
<div class="num" style="left:747.3px;top:299px;width:60px;letter-spacing:0.3px">0.00</div>
<div class="num" style="left:817.3px;top:299px;width:60px;letter-spacing:0.3px">0.01</div>
<div class="num" style="left:887.3px;top:299px;width:60px;letter-spacing:0.3px">0.00</div>
<div class="num" style="left:957.3px;top:299px;width:60px;letter-spacing:0.3px">0.01</div>
<div class="num" style="left:1057.3px;top:299px;width:60px;letter-spacing:0.3px">0.04</div>
<div class="hl" style="left:119px;top:335px;width:270px"></div>
<div class="hl" style="left:390px;top:335px;width:729px;background:#d4d4d4"></div>
<svg class="a" style="left:128px;top:323px" width="7" height="7" viewBox="0 0 7 7"><path d="M6.5 .3 V6.5 H.3 Z" fill="#7a7a7a"/></svg>
<div class="t" style="left:141px;top:320px;font-size:12px;color:#222;letter-spacing:0.2px">2AW1-34</div>
<div class="t" style="left:306px;top:320px;font-size:12px;color:#222">千瓦时</div>
<div class="num" style="left:397.3px;top:320px;width:60px;letter-spacing:0.3px">0.00</div>
<div class="num" style="left:467.3px;top:320px;width:60px;letter-spacing:0.3px">0.69</div>
<div class="num" style="left:537.3px;top:320px;width:60px;letter-spacing:0.3px">0.28</div>
<div class="num" style="left:607.3px;top:320px;width:60px;letter-spacing:0.3px">0.08</div>
<div class="num" style="left:677.3px;top:320px;width:60px;letter-spacing:0.3px">0.08</div>
<div class="num" style="left:747.3px;top:320px;width:60px;letter-spacing:0.3px">1.15</div>
<div class="num" style="left:817.3px;top:320px;width:60px;letter-spacing:0.3px">0.17</div>
<div class="num" style="left:887.3px;top:320px;width:60px;letter-spacing:0.3px">0.04</div>
<div class="num" style="left:957.3px;top:320px;width:60px;letter-spacing:0.3px">0.03</div>
<div class="num" style="left:1057.3px;top:320px;width:60px;letter-spacing:0.3px">2.52</div>
<div class="hl" style="left:119px;top:356px;width:270px"></div>
<div class="hl" style="left:390px;top:356px;width:729px;background:#d4d4d4"></div>
<svg class="a" style="left:128px;top:344px" width="7" height="7" viewBox="0 0 7 7"><path d="M6.5 .3 V6.5 H.3 Z" fill="#7a7a7a"/></svg>
<div class="t" style="left:141px;top:341px;font-size:12px;color:#222;letter-spacing:0.2px">2AW1-35</div>
<div class="t" style="left:306px;top:341px;font-size:12px;color:#222">千瓦时</div>
<div class="num" style="left:397.3px;top:341px;width:60px;letter-spacing:0.3px">0.00</div>
<div class="num" style="left:467.3px;top:341px;width:60px;letter-spacing:0.3px">0.00</div>
<div class="num" style="left:537.3px;top:341px;width:60px;letter-spacing:0.3px">0.00</div>
<div class="num" style="left:607.3px;top:341px;width:60px;letter-spacing:0.3px">0.01</div>
<div class="num" style="left:677.3px;top:341px;width:60px;letter-spacing:0.3px">0.00</div>
<div class="num" style="left:747.3px;top:341px;width:60px;letter-spacing:0.3px">0.01</div>
<div class="num" style="left:817.3px;top:341px;width:60px;letter-spacing:0.3px">0.00</div>
<div class="num" style="left:887.3px;top:341px;width:60px;letter-spacing:0.3px">0.00</div>
<div class="num" style="left:957.3px;top:341px;width:60px;letter-spacing:0.3px">0.01</div>
<div class="num" style="left:1057.3px;top:341px;width:60px;letter-spacing:0.3px">0.03</div>
<div class="hl" style="left:119px;top:377px;width:270px"></div>
<div class="hl" style="left:390px;top:377px;width:729px;background:#d4d4d4"></div>
<div class="num" style="left:397.3px;top:362px;width:60px;letter-spacing:0.3px">0.00</div>
<div class="num" style="left:467.3px;top:362px;width:60px;letter-spacing:0.3px">0.00</div>
<div class="num" style="left:537.3px;top:362px;width:60px;letter-spacing:0.3px">0.00</div>
<div class="num" style="left:607.3px;top:362px;width:60px;letter-spacing:0.3px">0.01</div>
<div class="num" style="left:677.3px;top:362px;width:60px;letter-spacing:0.3px">0.00</div>
<div class="num" style="left:747.3px;top:362px;width:60px;letter-spacing:0.3px">0.01</div>
<div class="num" style="left:817.3px;top:362px;width:60px;letter-spacing:0.3px">0.00</div>
<div class="num" style="left:887.3px;top:362px;width:60px;letter-spacing:0.3px">0.00</div>
<div class="num" style="left:957.3px;top:362px;width:60px;letter-spacing:0.3px">0.01</div>
<div class="num" style="left:1057.3px;top:362px;width:60px;letter-spacing:0.3px">0.03</div>
<div class="hl" style="left:0;top:365px;width:389px"></div>
<div class="a" style="left:390px;top:84px;width:69px;height:20px;border:1px dotted #333"></div>
</div>
<div class="a" style="left:1580px;top:242px;width:17px;height:366px;background:linear-gradient(90deg,#e6e6e6,#f2f2f2)"></div>
<div class="a" style="left:1580px;top:259px;width:17px;height:17px;background:#c6c6c6"></div>
<svg class="a" style="left:1584px;top:247px" width="9" height="6" viewBox="0 0 9 6"><path d="M1 5 L4.5 1.5 L8 5" fill="none" stroke="#666" stroke-width="1.8"/></svg>
<svg class="a" style="left:1584px;top:597px" width="9" height="6" viewBox="0 0 9 6"><path d="M1 1 L4.5 4.5 L8 1" fill="none" stroke="#666" stroke-width="1.8"/></svg>
<svg class="a" style="left:1022px;top:611px" width="9" height="6" viewBox="0 0 9 6"><path d="M1 1 L4.5 4.5 L8 1" fill="none" stroke="#666" stroke-width="1.8"/></svg>
<div class="a" style="left:458px;top:621px;width:1140px;height:216px;border:1px solid #a2a2a2;background:#fff"></div>
<svg class="a" style="left:458px;top:621px" width="1140" height="216" viewBox="458 621 1140 216" shape-rendering="crispEdges"><rect x="492" y="728" width="1094" height="1" fill="#dcdcdc"/><rect x="492" y="682" width="1094" height="1" fill="#dcdcdc"/><rect x="492" y="635" width="1094" height="1" fill="#dcdcdc"/><rect x="492.5" y="632.5" width="1094" height="143" fill="none" stroke="#a6a6a6" stroke-width="1"/><rect x="487" y="775" width="5" height="1" fill="#a6a6a6"/><rect x="489" y="759" width="3" height="1" fill="#a6a6a6"/><rect x="489" y="744" width="3" height="1" fill="#a6a6a6"/><rect x="487" y="728" width="5" height="1" fill="#a6a6a6"/><rect x="489" y="713" width="3" height="1" fill="#a6a6a6"/><rect x="489" y="697" width="3" height="1" fill="#a6a6a6"/><rect x="487" y="682" width="5" height="1" fill="#a6a6a6"/><rect x="489" y="666" width="3" height="1" fill="#a6a6a6"/><rect x="489" y="651" width="3" height="1" fill="#a6a6a6"/><rect x="487" y="635" width="5" height="1" fill="#a6a6a6"/><rect x="505" y="776" width="1" height="2" fill="#a6a6a6"/><rect x="529" y="776" width="1" height="2" fill="#a6a6a6"/><rect x="553" y="776" width="1" height="5" fill="#a6a6a6"/><rect x="578" y="776" width="1" height="2" fill="#a6a6a6"/><rect x="602" y="776" width="1" height="2" fill="#a6a6a6"/><rect x="626" y="776" width="1" height="2" fill="#a6a6a6"/><rect x="651" y="776" width="1" height="2" fill="#a6a6a6"/><rect x="675" y="776" width="1" height="5" fill="#a6a6a6"/><rect x="699" y="776" width="1" height="2" fill="#a6a6a6"/><rect x="723" y="776" width="1" height="2" fill="#a6a6a6"/><rect x="638.5" y="770.5" width="73" height="5.0" fill="#7fd23c" stroke="#6cba30" stroke-width="1"/><rect x="674" y="760" width="1" height="10" fill="#6cba30"/><rect x="664.5" y="745.5" width="20" height="15" fill="#fff" stroke="#6cba30" stroke-width="1"/><rect x="748" y="776" width="1" height="2" fill="#a6a6a6"/><rect x="772" y="776" width="1" height="2" fill="#a6a6a6"/><rect x="796" y="776" width="1" height="5" fill="#a6a6a6"/><rect x="821" y="776" width="1" height="2" fill="#a6a6a6"/><rect x="845" y="776" width="1" height="2" fill="#a6a6a6"/><rect x="759.5" y="761.5" width="73" height="14.0" fill="#7fd23c" stroke="#6cba30" stroke-width="1"/><rect x="796" y="751" width="1" height="10" fill="#6cba30"/><rect x="786.5" y="736.5" width="20" height="15" fill="#fff" stroke="#6cba30" stroke-width="1"/><rect x="869" y="776" width="1" height="2" fill="#a6a6a6"/><rect x="894" y="776" width="1" height="2" fill="#a6a6a6"/><rect x="918" y="776" width="1" height="5" fill="#a6a6a6"/><rect x="942" y="776" width="1" height="2" fill="#a6a6a6"/><rect x="967" y="776" width="1" height="2" fill="#a6a6a6"/><rect x="881.5" y="645.5" width="73" height="130.0" fill="#7fd23c" stroke="#6cba30" stroke-width="1"/><rect x="917" y="642" width="1" height="3" fill="#6cba30"/><rect x="907.5" y="627.5" width="20" height="15" fill="#fff" stroke="#6cba30" stroke-width="1"/><rect x="991" y="776" width="1" height="2" fill="#a6a6a6"/><rect x="1015" y="776" width="1" height="2" fill="#a6a6a6"/><rect x="1040" y="776" width="1" height="5" fill="#a6a6a6"/><rect x="1064" y="776" width="1" height="2" fill="#a6a6a6"/><rect x="1088" y="776" width="1" height="2" fill="#a6a6a6"/><rect x="1003.5" y="719.5" width="72" height="56.0" fill="#7fd23c" stroke="#6cba30" stroke-width="1"/><rect x="1039" y="709" width="1" height="10" fill="#6cba30"/><rect x="1029.5" y="694.5" width="20" height="15" fill="#fff" stroke="#6cba30" stroke-width="1"/><rect x="1112" y="776" width="1" height="2" fill="#a6a6a6"/><rect x="1137" y="776" width="1" height="2" fill="#a6a6a6"/><rect x="1161" y="776" width="1" height="5" fill="#a6a6a6"/><rect x="1185" y="776" width="1" height="2" fill="#a6a6a6"/><rect x="1210" y="776" width="1" height="2" fill="#a6a6a6"/><rect x="1124.5" y="719.5" width="73" height="56.0" fill="#7fd23c" stroke="#6cba30" stroke-width="1"/><rect x="1161" y="709" width="1" height="10" fill="#6cba30"/><rect x="1151.5" y="694.5" width="20" height="15" fill="#fff" stroke="#6cba30" stroke-width="1"/><rect x="1234" y="776" width="1" height="2" fill="#a6a6a6"/><rect x="1258" y="776" width="1" height="2" fill="#a6a6a6"/><rect x="1283" y="776" width="1" height="5" fill="#a6a6a6"/><rect x="1307" y="776" width="1" height="2" fill="#a6a6a6"/><rect x="1331" y="776" width="1" height="2" fill="#a6a6a6"/><rect x="1246.5" y="724.5" width="73" height="51.0" fill="#7fd23c" stroke="#6cba30" stroke-width="1"/><rect x="1282" y="714" width="1" height="10" fill="#6cba30"/><rect x="1272.5" y="699.5" width="20" height="15" fill="#fff" stroke="#6cba30" stroke-width="1"/><rect x="1356" y="776" width="1" height="2" fill="#a6a6a6"/><rect x="1380" y="776" width="1" height="2" fill="#a6a6a6"/><rect x="1404" y="776" width="1" height="5" fill="#a6a6a6"/><rect x="1428" y="776" width="1" height="2" fill="#a6a6a6"/><rect x="1453" y="776" width="1" height="2" fill="#a6a6a6"/><rect x="1367.5" y="724.5" width="73" height="51.0" fill="#7fd23c" stroke="#6cba30" stroke-width="1"/><rect x="1404" y="714" width="1" height="10" fill="#6cba30"/><rect x="1394.5" y="699.5" width="20" height="15" fill="#fff" stroke="#6cba30" stroke-width="1"/><rect x="1477" y="776" width="1" height="2" fill="#a6a6a6"/><rect x="1501" y="776" width="1" height="2" fill="#a6a6a6"/><rect x="1526" y="776" width="1" height="5" fill="#a6a6a6"/><rect x="1550" y="776" width="1" height="2" fill="#a6a6a6"/><rect x="1574" y="776" width="1" height="2" fill="#a6a6a6"/><rect x="1489.5" y="733.5" width="73" height="42.0" fill="#7fd23c" stroke="#6cba30" stroke-width="1"/><rect x="1525" y="723" width="1" height="10" fill="#6cba30"/><rect x="1515.5" y="708.5" width="20" height="15" fill="#fff" stroke="#6cba30" stroke-width="1"/></svg>
<div class="t" style="left:664px;top:748px;width:21px;text-align:center;font-size:11px;color:#62b02c">0.0</div>
<div class="t" style="left:786px;top:739px;width:21px;text-align:center;font-size:11px;color:#62b02c">0.0</div>
<div class="t" style="left:907px;top:630px;width:21px;text-align:center;font-size:11px;color:#62b02c">0.3</div>
<div class="t" style="left:1029px;top:697px;width:21px;text-align:center;font-size:11px;color:#62b02c">0.1</div>
<div class="t" style="left:1151px;top:697px;width:21px;text-align:center;font-size:11px;color:#62b02c">0.1</div>
<div class="t" style="left:1272px;top:702px;width:21px;text-align:center;font-size:11px;color:#62b02c">0.1</div>
<div class="t" style="left:1394px;top:702px;width:21px;text-align:center;font-size:11px;color:#62b02c">0.1</div>
<div class="t" style="left:1515px;top:711px;width:21px;text-align:center;font-size:11px;color:#62b02c">0.1</div>
<div class="t" style="left:452px;top:770px;width:30px;text-align:right;font-size:11px;color:#333">0</div>
<div class="t" style="left:452px;top:723px;width:30px;text-align:right;font-size:11px;color:#333">0.1</div>
<div class="t" style="left:452px;top:677px;width:30px;text-align:right;font-size:11px;color:#333">0.2</div>
<div class="t" style="left:452px;top:630px;width:30px;text-align:right;font-size:11px;color:#333">0.3</div>
<div class="t" style="left:493px;top:786px;width:120px;text-align:center;font-size:11px;color:#333;letter-spacing:0.1px">2019/6/11 | 0</div>
<div class="t" style="left:615px;top:786px;width:120px;text-align:center;font-size:11px;color:#333;letter-spacing:0.1px">2019/6/11 | 16</div>
<div class="t" style="left:736px;top:786px;width:120px;text-align:center;font-size:11px;color:#333;letter-spacing:0.1px">2019/6/11 | 17</div>
<div class="t" style="left:858px;top:786px;width:120px;text-align:center;font-size:11px;color:#333;letter-spacing:0.1px">2019/6/11 | 18</div>
<div class="t" style="left:980px;top:786px;width:120px;text-align:center;font-size:11px;color:#333;letter-spacing:0.1px">2019/6/11 | 19</div>
<div class="t" style="left:1101px;top:786px;width:120px;text-align:center;font-size:11px;color:#333;letter-spacing:0.1px">2019/6/11 | 20</div>
<div class="t" style="left:1223px;top:786px;width:120px;text-align:center;font-size:11px;color:#333;letter-spacing:0.1px">2019/6/11 | 21</div>
<div class="t" style="left:1344px;top:786px;width:120px;text-align:center;font-size:11px;color:#333;letter-spacing:0.1px">2019/6/11 | 22</div>
<div class="t" style="left:1466px;top:786px;width:120px;text-align:center;font-size:11px;color:#333;letter-spacing:0.1px">2019/6/11 | 23</div>
<div class="a" style="left:951px;top:804px;width:154px;height:22px;border:1px solid #a6a6a6;background:#fff"></div>
<div class="a" style="left:955px;top:808px;width:18px;height:14px;background:#7fd23c;border:1px solid #6cba30"></div>
<div class="t" style="left:978px;top:810px;font-size:11.3px;color:#333;letter-spacing:0.1px">7#楼 | 1AW1-5 | 千瓦时</div>
<svg class="a" style="left:838px;top:840px" width="44" height="42" viewBox="838 840 44 42"><path d="M873.52 865.94 A16.0 16.0 0 1 1 870.19 850.29 L865.95 854.11 A10.3 10.3 0 1 0 868.10 864.18 Z" fill="#696969"/><path d="M873.8 844.6 V860.2 L859 857.6 Z" fill="#696969"/></svg>
<svg class="a" style="left:918px;top:840px" width="40" height="42" viewBox="918 840 40 42"><path d="M923.5 845 H937.8 L946 852.2 V875.5 Q946 877 944.5 877 H923.5 Q922 877 922 875.5 V846.5 Q922 845 923.5 845 Z" fill="#696969"/><path d="M936 861 H942.2 V854.9 L952 863.8 L942.2 872.7 V866.6 H936 Z" fill="#696969" stroke="#f0f0f0" stroke-width="3.6" stroke-linejoin="round"/><path d="M936 861 H942.2 V854.9 L952 863.8 L942.2 872.7 V866.6 H936 Z" fill="#696969"/></svg>
<div class="t" style="left:834px;top:881px;font-size:12px;color:#787878">加载数据</div>
<div class="t" style="left:912px;top:881px;font-size:12px;color:#787878">导出数据</div>
</body></html>
